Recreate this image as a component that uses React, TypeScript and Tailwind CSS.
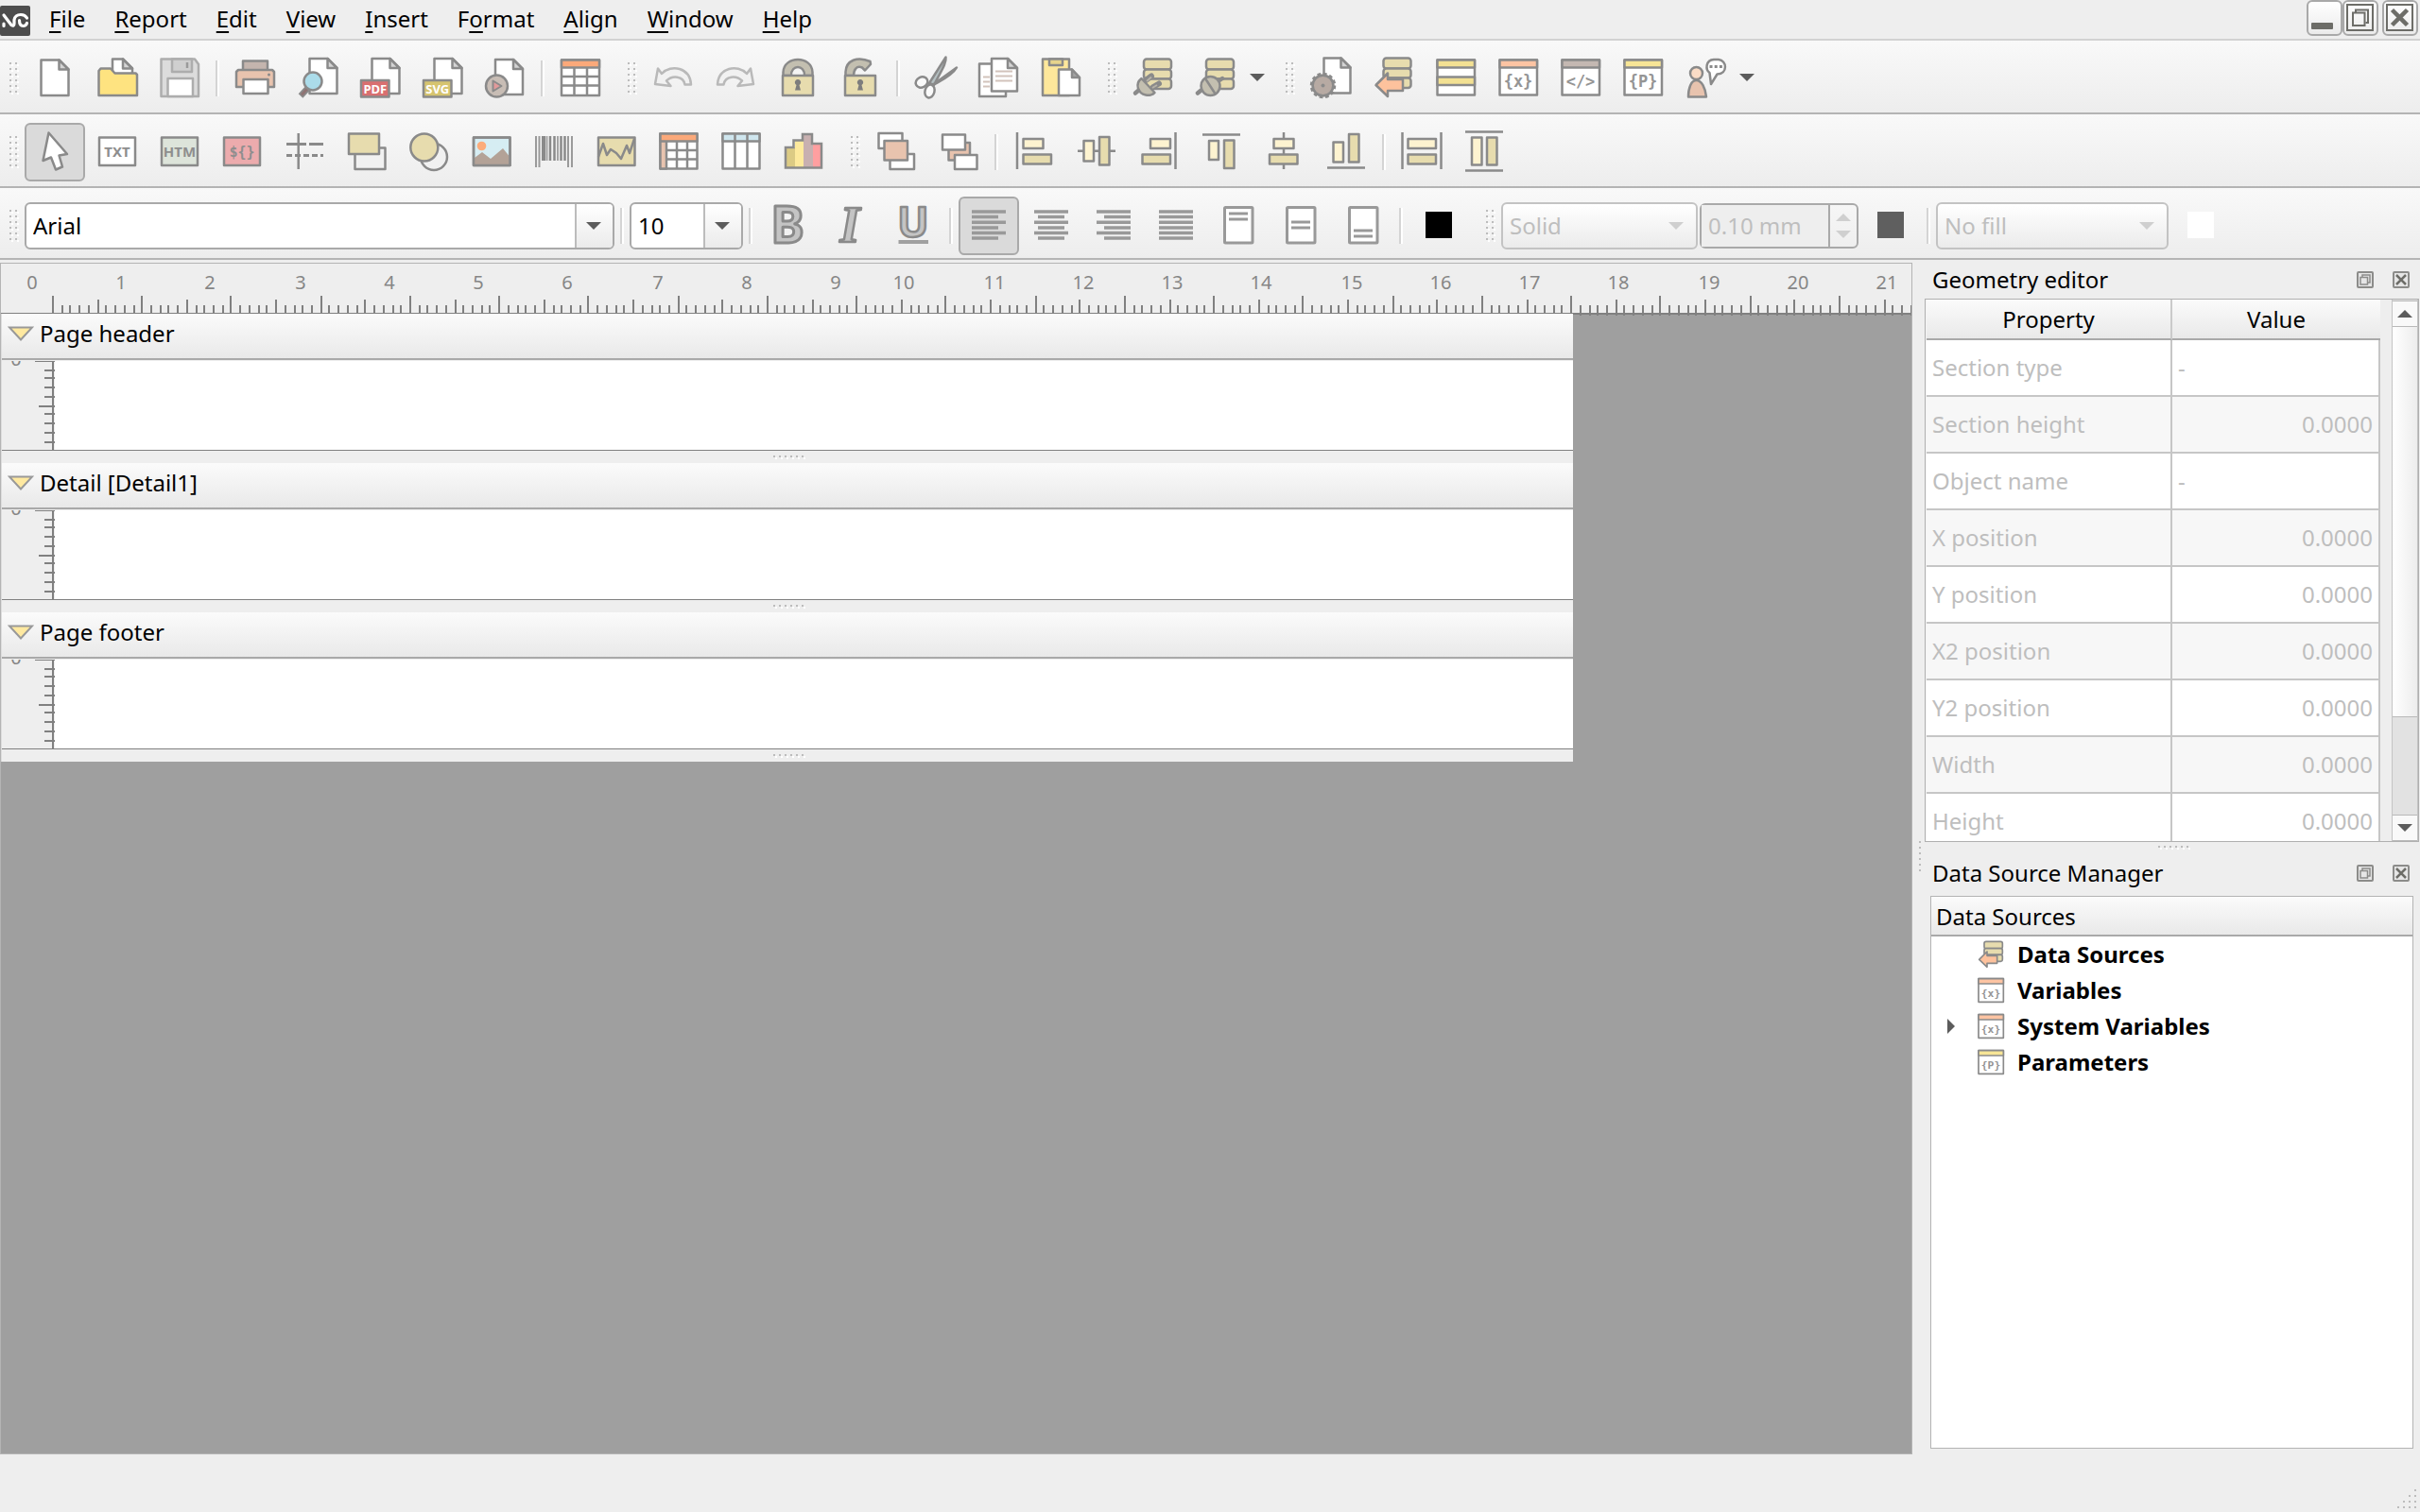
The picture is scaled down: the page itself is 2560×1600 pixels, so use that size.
import React, { type ReactNode } from "react";

const LINE = "#8a8a8a";
const SAND = "#e7dcae";
const CREAM = "#fdf3d0";
const PEACH = "#e8c3ae";
const MONO = "'DejaVu Sans Mono', monospace";

// ---------- icons (48 x 48 grid) ----------

function Icon({ children, className = "size-12" }: { children: ReactNode; className?: string }) {
  return (
    <svg
      viewBox="0 0 48 48"
      className={"overflow-visible " + className}
      fill="none"
      stroke={LINE}
      strokeWidth="2.5"
      strokeLinejoin="round"
      fontFamily="'Noto Sans', sans-serif"
      aria-hidden="true"
    >
      {children}
    </svg>
  );
}

// Sheet of paper with a folded corner
function Sheet({ x, y, w, h }: { x: number; y: number; w: number; h: number }) {
  const r = x + w;
  return (
    <>
      <path d={`M${x} ${y}H${r - 10}L${r} ${y + 10}V${y + h}H${x}Z`} fill="#fff" />
      <path d={`M${r - 10} ${y}V${y + 10}H${r}Z`} fill="#d4d4d4" />
    </>
  );
}

function Box({ x, y, w, h, fill = "#fff" }: { x: number; y: number; w: number; h: number; fill?: string }) {
  return <rect x={x} y={y} width={w} height={h} fill={fill} />;
}

// Database stack
function Stack({ x, y }: { x: number; y: number }) {
  return (
    <g fill={SAND}>
      <rect x={x} y={y} width="29" height="11" rx="3" />
      <rect x={x} y={y + 11} width="29" height="10" rx="3" />
      <rect x={x} y={y + 21} width="29" height="10.5" rx="3" />
    </g>
  );
}

const NewIcon = () => (
  <Icon>
    <Sheet x={9.5} y={5.5} w={29} h={37.5} />
  </Icon>
);

const OpenIcon = () => (
  <Icon>
    <Sheet x={19} y={4.5} w={21} h={30} />
    <path d="M4.5 43V17l2-2.500h10.500l4.500 5h22l1.500 1.500V43Z" fill="#fee380" />
  </Icon>
);

const SaveIcon = () => (
  <Icon>
    <g stroke="#adadad">
      <path d="M4.500 4.500H40L44 10V44H4.500Z" fill="#dcdcdc" />
      <rect x="16" y="4.500" width="21" height="13.500" fill="#cfcfcf" />
      <path d="M32 8v6" stroke="#9a9a9a" />
      <rect x="11.500" y="25" width="26.500" height="19" fill="#fff" />
    </g>
  </Icon>
);

const PrintIcon = () => (
  <Icon>
    <Box x={11} y={6.5} w={26} h={10} fill="#c4b5ae" />
    <path d="M6 16H42L44 18V34H4V18Z" fill={PEACH} />
    <Box x={11.5} y={26} w={26} h={15} />
    <circle cx="38.500" cy="21" r="1.500" fill={LINE} stroke="none" />
  </Icon>
);

const PreviewIcon = () => (
  <Icon>
    <Sheet x={15.5} y={4} w={29} h={37} />
    <path d="M13 36L6 43.500" stroke={LINE} strokeWidth="6.500" />
    <path d="M13 36L7 42.500" stroke="#8f7373" strokeWidth="3" />
    <circle cx="19" cy="28" r="9.500" fill="#abdcea" />
  </Icon>
);

const PdfIcon = () => (
  <Icon>
    <Sheet x={15.5} y={4} w={29} h={37} />
    <Box x={4} y={27} w={29.5} h={17.5} fill="#d96f70" />
    <text x="18.800" y="40.500" fontSize="13" fontWeight="700" fill="#fff" stroke="none" textAnchor="middle">
      PDF
    </text>
  </Icon>
);

const SvgIcon = () => (
  <Icon>
    <Sheet x={15.5} y={4} w={29} h={37} />
    <Box x={4} y={27} w={29.5} h={17.5} fill="#d6c46f" />
    <text x="18.800" y="40.500" fontSize="13" fontWeight="700" fill="#fff" stroke="none" textAnchor="middle">
      SVG
    </text>
  </Icon>
);

const RunIcon = () => (
  <Icon>
    <Sheet x={14} y={5} w={29} h={37} />
    <circle cx="15.500" cy="33" r="11.500" fill="#c8bdb5" />
    <path d="M11.500 27.500V38.500L20.500 33Z" fill="#e29a9a" strokeWidth="2" />
  </Icon>
);

const TableIcon = () => (
  <Icon>
    <Box x={4} y={5.5} w={40} h={37.5} />
    <Box x={4} y={5.5} w={40} h={8} fill="#fba97a" />
    <path d="M4 23H44M4 32.500H44M17.500 14V43M31 14V43" />
  </Icon>
);

const UndoPath = () => (
  <path
    d="M8 14.500L5 31L21.500 33L17 27.500C23 21.500 35 22 36.500 31.500H43C42 13.500 22 9.500 12 20Z"
    fill="#f1f1f1"
    stroke="#b9b9b9"
    strokeWidth="2.5"
  />
);

const UndoIcon = () => (
  <Icon>
    <UndoPath />
  </Icon>
);

const RedoIcon = () => (
  <Icon>
    <g transform="matrix(-1 0 0 1 48 0)">
      <UndoPath />
    </g>
  </Icon>
);

const LockIcon = () => (
  <Icon>
    <path d="M8.500 22V18.500C9 .5 39 .5 39.500 18.500V22H31C31.500 10 16.500 10 17 22Z" fill="#c3bfb0" />
    <Box x={8} y={22} w={32} h={21} fill={SAND} />
    <path d="M21 37.500L22.500 32A3.200 3.200 0 1 1 25.500 32L27 37.500Z" fill="#7d7d7d" stroke="none" />
  </Icon>
);

const UnlockIcon = () => (
  <Icon>
    <path d="M8.500 22V18C9 6 21 1 34.500 7L35 10L29 16.500L26 13.500C20 11 17 16 17 22Z" fill="#c3bfb0" />
    <Box x={8} y={22} w={32} h={21} fill={SAND} />
    <path d="M21 37.500L22.500 32A3.200 3.200 0 1 1 25.500 32L27 37.500Z" fill="#7d7d7d" stroke="none" />
  </Icon>
);

const CutIcon = () => (
  <Icon>
    <path d="M17 30L34.500 2.500C35.500 9 29 18 22 32Z" fill="#b4c0c2" />
    <path d="M19 33L46 13.500C43 19 36 24 25 30Z" fill="#b4c0c2" />
    <ellipse cx="9" cy="29" rx="6.500" ry="5.500" transform="rotate(-25 9 29)" fill="#fafafa" />
    <ellipse cx="17.500" cy="38.500" rx="5" ry="7" transform="rotate(15 17.500 38.500)" fill="#fafafa" />
  </Icon>
);

const CopyIcon = () => (
  <Icon>
    <Box x={4} y={9.5} w={28} h={34.5} />
    <path d="M8 23.500H15M8 28.500H15M8 33.500H15" stroke="#d2c3bb" strokeWidth="2" />
    <Sheet x={17} y={4} w={27} h={34.5} />
    <path d="M21 17.500H39M21 22.500H39M21 27.500H39" stroke="#d2c3bb" strokeWidth="2" />
  </Icon>
);

const PasteIcon = () => (
  <Icon>
    <Box x={5} y={4.5} w={28} h={38.5} fill="#fde79b" />
    <Box x={12} y={4.500} w={14} h={6.500} fill="#e7d48c" />
    <path d="M22 15.500H36L44 24V43H22Z" fill="#fff" />
    <path d="M36 15.500V24H44Z" fill="#a4a4a4" />
  </Icon>
);

const ConnectIcon = () => (
  <Icon>
    <Stack x={14} y={4.5} />
    <path d="M16 27L22 22.500M24 34L30 30.500" strokeWidth="6" strokeLinecap="round" />
    <path d="M11.500 25C4 31 8 41 16 42.500C20 43.500 24 42 25.500 40Z" fill="#c3bfb0" />
    <path d="M17 28L22 23.500M23 35L28 32" stroke="#b5b1a6" strokeWidth="2" />
    <path d="M8 38L5 40.500" strokeWidth="4.500" strokeLinecap="round" />
  </Icon>
);

const DisconnectIcon = () => (
  <Icon>
    <Stack x={14} y={4.5} />
    <path d="M8 38L5 40.500M28 27L31 25" strokeWidth="4.500" strokeLinecap="round" />
    <circle cx="18.500" cy="33" r="10" fill="#c3bfb0" />
    <path d="M13 25L24 42" />
  </Icon>
);

const SettingsIcon = () => (
  <Icon>
    <Sheet x={16.500} y={3.500} w={28} h={37} />
    <circle cx="15.500" cy="32.500" r="12" fill="#b7aaa3" stroke="none" />
    <circle cx="15.500" cy="32.500" r="12.500" strokeWidth="2.5" strokeDasharray="3.800 2.745" />
    <circle cx="15.500" cy="32.500" r="10.800" />
    <circle cx="15.500" cy="32.500" r="2" fill={LINE} stroke="none" />
  </Icon>
);

const DataSourceIcon = ({ className }: { className?: string }) => (
  <Icon className={className}>
    <Stack x={13.500} y={3.500} />
    <path d="M5.500 32L18 19.500V26H34V38H18V44Z" fill="#fdc29d" />
  </Icon>
);

const GroupsIcon = () => (
  <Icon>
    <Box x={4.500} y={5.500} w={39.500} h={37} />
    <Box x={4.500} y={5.500} w={39.500} h={8} fill="#f3e193" />
    <Box x={4.500} y={23.500} w={39.500} h={8.500} fill="#f3e193" />
  </Icon>
);

// Window with a coloured title bar and a short code in it
function CodeIcon({ code, fill, className }: { code: string; fill: string; className?: string }) {
  return (
    <Icon className={className}>
      <Box x={4.500} y={5.500} w={39.500} h={37} />
      <Box x={4.500} y={5.500} w={39.500} h={8} fill={fill} />
      <text
        x="24"
        y="34"
        fontSize="17"
        fontWeight="700"
        fontFamily={MONO}
        fill="#959595"
        stroke="none"
        textAnchor="middle"
      >
        {code}
      </text>
    </Icon>
  );
}

const SupportIcon = () => (
  <Icon>
    <path d="M6 44.500C6 35 9 27 14.500 27S24 35 25 44.500Z" fill={PEACH} />
    <circle cx="14.500" cy="19.500" r="6.500" fill="#fbdcc6" />
    <path d="M30 31L28.500 19C24 16 24 5.500 33 5H38C47 6 48 20 36.500 20.500Z" fill="#fff" />
    <path d="M28.500 12.500H42" strokeWidth="3" strokeDasharray="3 2.200" />
  </Icon>
);

const PointerIcon = () => (
  <Icon>
    <path d="M17.500 4.500L37 27L28.500 28.500L32 40.500L25 43.500L20 30.500L11.500 34Z" fill="#fff" />
  </Icon>
);

function LabelIcon({ text, fill, font }: { text: string; fill: string; font?: string }) {
  return (
    <Icon>
      <Box x={5} y={9.500} w={38} h={29.500} fill={fill} />
      <text
        x="24"
        y="29.500"
        fontSize="15"
        fontWeight="700"
        fontFamily={font}
        fill="#8e8e8e"
        stroke="none"
        textAnchor="middle"
      >
        {text}
      </text>
    </Icon>
  );
}

const GuidesIcon = () => (
  <Icon>
    <path d="M17.700 5V43" />
    <path d="M5 16.500H26M29 16.500H44" strokeWidth="3" />
    <path d="M5 28.500H44" strokeWidth="3" strokeDasharray="6 3" />
  </Icon>
);

const RectIcon = () => (
  <Icon>
    <Box x={11.500} y={20.500} w={32} h={22.500} fill="#f1f1f1" />
    <Box x={5} y={5.500} w={32} h={21.500} fill={SAND} />
  </Icon>
);

const EllipseIcon = () => (
  <Icon>
    <circle cx="29" cy="30" r="14" fill="#f1f1f1" />
    <circle cx="18.800" cy="20" r="14.500" fill={SAND} />
  </Icon>
);

const ImageIcon = () => (
  <Icon>
    <Box x={5} y={9.500} w={38.500} h={29.500} fill="#d6edf3" />
    <circle cx="13.500" cy="18.500" r="4.800" fill="#fcac7b" stroke="none" />
    <path d="M6 31L14 25L23 32L36 21L42.500 29V38H6Z" fill="#b3a297" stroke="none" />
    <Box x={5} y={9.500} w={38.500} h={29.500} fill="none" />
  </Icon>
);

const BarcodeIcon = () => (
  <Icon>
    <path d="M5 8V41M8.500 8V41M39 8V41M43 8V41" strokeWidth="2" stroke="#9a9a9a" />
    <path d="M13 8V34" strokeWidth="4" />
    <path d="M20 8V34M24.500 8V34M31.500 8V34M35.500 8V34" strokeWidth="2.5" />
    <path d="M16.500 8V34M28 8V34" strokeWidth="2" stroke="#a4a4a4" />
  </Icon>
);

const ChartLineIcon = () => (
  <Icon>
    <Box x={5} y={9.500} w={38.500} h={29.500} fill={SAND} />
    <path d="M5 30L10 16L14 28L18 22L24 26L29 32L35 18L38 26L43 11" />
  </Icon>
);

const CrosstabIcon = () => (
  <Icon>
    <Box x={4.500} y={5.500} w={39} h={37} />
    <Box x={4.500} y={5.500} w={6.500} h={37} fill={PEACH} />
    <Box x={4.500} y={5.500} w={39} h={8} fill="#fba97a" />
    <path d="M11 23H44M11 32.500H44M22 14V42M33 14V42" />
  </Icon>
);

const BandTableIcon = () => (
  <Icon>
    <Box x={4.500} y={5.500} w={39} h={37} />
    <Box x={4.500} y={5.500} w={39} h={8} fill="#cfe6ee" />
    <path d="M17.500 6V42M30.500 6V42" />
  </Icon>
);

const BarsIcon = () => (
  <Icon>
    <g stroke="none">
      <Box x={5} y={20} w={10} h={21} fill="#dccb84" />
      <Box x={15} y={12} w={9} h={29} fill="#fde99c" />
      <Box x={24} y={6} w={10} h={35} fill="#c8b0b0" />
      <Box x={34} y={16} w={9} h={25} fill="#ff9fa0" />
    </g>
    <path d="M5 41.500V20H13.500V12.500H23V6H33V16H43V41.500Z" strokeLinejoin="miter" />
  </Icon>
);

const ToFrontIcon = () => (
  <Icon>
    <Box x={5.500} y={5} w={25} h={16} />
    <Box x={17.500} y={27} w={25.500} h={16} />
    <Box x={11.500} y={13} w={24.500} h={20.500} fill={PEACH} />
  </Icon>
);

const ToBackIcon = () => (
  <Icon>
    <Box x={13.500} y={15} w={22.500} h={18.500} fill={PEACH} />
    <Box x={7} y={6.500} w={24} h={16} />
    <Box x={20} y={28} w={23.500} h={15} />
  </Icon>
);

const AlignLeftIcon = () => (
  <Icon>
    <path d="M6 4V43" />
    <Box x={12.500} y={11} w={21} h={10} fill={CREAM} />
    <Box x={12.500} y={27.500} w={29.500} h={10} fill={SAND} />
  </Icon>
);

const AlignHCenterIcon = () => (
  <Icon>
    <path d="M4 23.800H44" />
    <Box x={10.500} y={13} w={10.500} h={21.500} fill={CREAM} />
    <Box x={27} y={9} w={10.500} h={29.500} fill={SAND} />
  </Icon>
);

const AlignRightIcon = () => (
  <Icon>
    <path d="M41.500 4V43" />
    <Box x={15} y={11} w={21} h={10} fill={CREAM} />
    <Box x={6.500} y={27.500} w={29.500} h={10} fill={SAND} />
  </Icon>
);

const AlignTopIcon = () => (
  <Icon>
    <path d="M4 6.500H44" />
    <Box x={11} y={13} w={10} h={20} fill={CREAM} />
    <Box x={27} y={12.500} w={10.500} h={29.500} fill={SAND} />
  </Icon>
);

const AlignVCenterIcon = () => (
  <Icon>
    <path d="M24 4V43" />
    <Box x={13.500} y={11} w={21} h={10} fill={CREAM} />
    <Box x={9} y={27.500} w={29.500} h={10} fill={SAND} />
  </Icon>
);

const AlignBottomIcon = () => (
  <Icon>
    <path d="M4 41.500H44" />
    <Box x={10.500} y={14.500} w={10.500} h={21} fill={CREAM} />
    <Box x={27} y={6} w={10.500} h={29.500} fill={SAND} />
  </Icon>
);

const SameWidthIcon = () => (
  <Icon>
    <path d="M3.500 4V43M44.500 4V43" />
    <Box x={9.500} y={11} w={29.500} h={10} fill={CREAM} />
    <Box x={9.500} y={27.500} w={29.500} h={10} fill={SAND} />
  </Icon>
);

const SameHeightIcon = () => (
  <Icon>
    <path d="M4 3.500H44M4 44.500H44" />
    <Box x={11} y={9.500} w={10.500} h={29} fill={CREAM} />
    <Box x={27} y={9.500} w={10.500} h={29} fill={SAND} />
  </Icon>
);

const BoldIcon = () => (
  <Icon>
    <text x="23" y="43" fontSize="53" fontWeight="700" fill="#c4c4c4" strokeWidth="3" textAnchor="middle">
      B
    </text>
  </Icon>
);

const ItalicIcon = () => (
  <Icon>
    <text
      x="23"
      y="41.500"
      fontSize="54"
      fontWeight="700"
      fontStyle="italic"
      fontFamily="'Liberation Serif', serif"
      fill="#c4c4c4"
      textAnchor="middle"
    >
      I
    </text>
  </Icon>
);

const UnderlineIcon = () => (
  <Icon>
    <text x="24" y="36.500" fontSize="44" fontWeight="700" fill="#c4c4c4" textAnchor="middle">
      U
    </text>
    <path d="M8.500 42H40" stroke="#a0a0a0" strokeWidth="4" />
  </Icon>
);

// Long and short lines by turns, the short ones run from x1 to x2
function TextLines({ x1, x2 }: { x1: number; x2: number }) {
  return (
    <Icon>
      <g stroke="#999" strokeWidth="3.500">
        <path d="M6 10H42M6 21.300H42M6 32.600H42" />
        <path d={`M${x1} 15.600H${x2}M${x1} 27H${x2}M${x1} 38H${x2}`} />
      </g>
    </Icon>
  );
}

function PageLines({ y }: { y: number }) {
  return (
    <Icon>
      <rect x="9.500" y="5.500" width="29.500" height="37.500" rx="1" fill="#fff" stroke="#999" strokeWidth="3" />
      <path d={`M14 ${y}H34M14 ${y + 6}H34`} stroke="#999" strokeWidth="3" />
    </Icon>
  );
}

// ---------- toolbar parts ----------

const RAISED = "bg-gradient-to-b from-white to-[#ebebeb]";
const HEADER = "bg-gradient-to-b from-[#fbfbfb] to-[#e9e9e9]";

function Toolbar({ children, height = "h-[78px]" }: { children: ReactNode; height?: string }) {
  return (
    <div
      role="toolbar"
      className={
        "flex shrink-0 items-start border-b-2 border-[#b4b4b4] bg-gradient-to-b from-[#f9f9f9] to-[#ededed] pt-[9px] " +
        height
      }
    >
      {children}
    </div>
  );
}

function Group({ children }: { children: ReactNode }) {
  return (
    <div className="flex items-center gap-[2px] pr-2">
      <Handle />
      {children}
    </div>
  );
}

function Handle() {
  const dots: ReactNode[] = [];
  for (let row = 0; row < 6; row++) {
    for (let col = 0; col < 2; col++) {
      dots.push(
        <g key={`${row}-${col}`} transform={`translate(${col * 6} ${row * 6})`}>
          <rect x="2" y="2" width="2" height="2" fill="#fff" />
          <rect width="2" height="2" fill="#bcbcbc" />
        </g>
      );
    }
  }
  return (
    <span className="flex w-6 justify-center pl-[6px]" aria-hidden="true">
      <svg width="10" height="34" shapeRendering="crispEdges">
        {dots}
      </svg>
    </span>
  );
}

function Divider() {
  return (
    <span className="flex w-3 justify-center" aria-hidden="true">
      <span className="h-[38px] w-1 border-x-2 border-l-[#d4d4d4] border-r-white" />
    </span>
  );
}

function Tool({ label, active, children }: { label: string; active?: boolean; children: ReactNode }) {
  return (
    <button
      type="button"
      aria-label={label}
      aria-pressed={active}
      className={
        "flex h-[62px] w-16 items-center justify-center rounded-md border-2 pb-[2px] " +
        (active ? "border-[#a9a9a9] bg-[#dadada]" : "border-transparent hover:bg-white/60")
      }
    >
      {children}
    </button>
  );
}

function Triangle({ className }: { className?: string }) {
  return (
    <svg width="16" height="8" viewBox="0 0 16 8" className={className} aria-hidden="true">
      <path d="M0 0H16L8 8Z" fill="currentColor" />
    </svg>
  );
}

function MenuTool({ label, children }: { label: string; children: ReactNode }) {
  return (
    <button
      type="button"
      aria-label={label}
      className="flex h-[62px] w-[88px] items-center rounded-md border-2 border-transparent pb-[2px] pl-[6px] hover:bg-white/60"
    >
      {children}
      <Triangle className="ml-3 text-[#5c5c5c]" />
    </button>
  );
}

// Drop-down; "split" draws the arrow on a button of its own
function Combo({ label, value, split, disabled, width }: {
  label: string;
  value: string;
  split?: boolean;
  disabled?: boolean;
  width: string;
}) {
  return (
    <span className={"relative flex h-[50px] " + width}>
      <select
        aria-label={label}
        disabled={disabled}
        defaultValue={value}
        className={
          "w-full appearance-none rounded-md border-2 pl-[7px] pr-10 outline-none " +
          (split ? "border-[#a9a9a9] bg-white " : "bg-gradient-to-b from-white to-[#ebebeb] ") +
          (disabled ? "border-[#c3c3c3] text-[#bebebe] opacity-100" : "border-[#a9a9a9] text-black")
        }
      >
        <option>{value}</option>
      </select>
      <span
        className={
          "pointer-events-none absolute inset-y-[2px] right-[2px] flex w-10 items-center justify-center rounded-r pr-[3px] " +
          (split ? "border-l-2 border-[#bcbcbc] text-[#5c5c5c] " + RAISED : "text-[#cfcfcf]")
        }
      >
        <Triangle />
      </span>
    </span>
  );
}

function Swatch({ label, color }: { label: string; color: string }) {
  return (
    <Tool label={label}>
      <span className={"size-7 " + color} />
    </Tool>
  );
}

// ---------- title bar ----------

const MENU = [
  ["", "F", "ile"],
  ["", "R", "eport"],
  ["", "E", "dit"],
  ["", "V", "iew"],
  ["", "I", "nsert"],
  ["F", "o", "rmat"],
  ["", "A", "lign"],
  ["", "W", "indow"],
  ["", "H", "elp"],
];

function MenuBar() {
  const windowButton = "h-[38px] w-[38px] rounded-md border-2 border-[#a9a9a9] " + RAISED;
  return (
    <header className="flex h-[43px] shrink-0 items-start border-b-2 border-[#d2d2d2]">
      <svg width="32" height="32" viewBox="0 0 32 32" className="mt-[6px]" aria-hidden="true">
        <rect width="32" height="32" rx="2" fill="#4d4d4d" />
        <g fill="none" stroke="#fff" strokeWidth="3.200" strokeLinecap="round">
          <path d="M4 10L12 20.500Q15 22.500 15 19V15Q16 9.500 22 9.500Q26.500 9.500 28.500 13" />
          <path d="M20.500 15.500Q20.500 21.500 24.500 21.500Q27.500 21.500 28.500 18.500" />
          <path d="M4 19V21.500" />
        </g>
      </svg>
      <nav className="ml-3 flex gap-[15px]">
        {MENU.map(([before, key, after]) => (
          <button key={before + key + after} type="button" className="px-2 leading-10">
            {before}
            <span className="underline decoration-2 underline-offset-4">{key}</span>
            {after}
          </button>
        ))}
      </nav>
      <div className="ml-auto flex pr-[2px]">
        <button type="button" aria-label="Minimize" className={windowButton}>
          <svg viewBox="0 0 34 34" className="size-full">
            <rect x="3" y="22" width="23" height="7" rx="1" fill="#6d6d68" />
          </svg>
        </button>
        <button type="button" aria-label="Restore" className={windowButton}>
          <svg viewBox="0 0 34 34" className="size-full" fill="none" stroke="#6d6d68" strokeWidth="2">
            <rect x="3" y="3" width="27" height="27" />
            <path d="M12 11V8.500H25V22H22.500" />
            <path d="M9 11.500H21.500V25H9Z" />
          </svg>
        </button>
        <button type="button" aria-label="Close" className={windowButton + " ml-1"}>
          <svg viewBox="0 0 34 34" className="size-full" fill="none" stroke="#6d6d68">
            <rect x="3" y="3" width="27" height="27" strokeWidth="2" />
            <path d="M8.500 8.500L24.500 24.500M24.500 8.500L8.500 24.500" strokeWidth="4.500" />
          </svg>
        </button>
      </div>
    </header>
  );
}

// ---------- report canvas ----------

// One millimetre is 4.7244 units of two pixels
const tick = (mm: number) => 2 * Math.round(mm * 4.7244);

function HorizontalRuler() {
  const marks = Array.from({ length: 220 }, (_, mm) => mm);
  return (
    <svg
      width="100%"
      height="55"
      className="-mb-[2px] block shrink-0"
      fill="#808080"
      shapeRendering="crispEdges"
      aria-hidden="true"
    >
      {marks.map((mm) => {
        const top = mm % 10 === 0 ? 34 : mm % 5 === 0 ? 38 : 44;
        return <rect key={mm} x={54 + tick(mm)} y={top} width="2" height={55 - top} />;
      })}
      {marks
        .filter((mm) => mm % 10 === 0)
        .map((mm) => (
          <text key={mm} x={(mm < 100 ? 33 : 11) + tick(mm)} y="27" fontSize="20" fill="#868686" textAnchor="middle">
            {mm / 10}
          </text>
        ))}
      <rect y="52" width="100%" height="2" />
    </svg>
  );
}

function VerticalRuler() {
  return (
    <svg
      width="56"
      height="94"
      className="block shrink-0 bg-[#eee]"
      fill="#808080"
      shapeRendering="crispEdges"
      aria-hidden="true"
    >
      <text x="15" y="5" fontSize="20" fill="#868686" textAnchor="middle">
        0
      </text>
      {Array.from({ length: 10 }, (_, mm) => {
        const left = mm === 0 ? 35 : mm === 5 ? 39 : 45;
        return <rect key={mm} x={left} y={tick(mm) - 1} width={56 - left} height="2" />;
      })}
      <rect x="53" width="2" height="94" />
    </svg>
  );
}

function SplitDots() {
  return (
    <svg width="34" height="4" className="ml-1" shapeRendering="crispEdges" aria-hidden="true">
      {[0, 1, 2, 3, 4, 5].map((i) => (
        <g key={i}>
          <rect x={i * 6 + 2} y="2" width="2" height="2" fill="#fff" />
          <rect x={i * 6} width="2" height="2" fill="#bcbcbc" />
        </g>
      ))}
    </svg>
  );
}

function Section({ title }: { title: string }) {
  return (
    <section>
      <div className={"h-[49px] border-b-2 border-[#a9a9a9] " + HEADER}>
        <button type="button" className="flex items-center gap-[6px] pl-[6px] leading-[42px]">
          <svg width="28" height="16" viewBox="0 0 28 16" aria-hidden="true">
            <path d="M2 1.500H26L14 14.500Z" fill="#ffe9a0" stroke="#999" strokeWidth="2" />
          </svg>
          {title}
        </button>
      </div>
      <div className="mt-px flex border-b border-[#808080] bg-white">
        <VerticalRuler />
      </div>
      <div className="flex h-[13px] items-center justify-center">
        <SplitDots />
      </div>
    </section>
  );
}

// ---------- docks ----------

const ROWS = [
  ["Section type", "-"],
  ["Section height", "0.0000"],
  ["Object name", "-"],
  ["X position", "0.0000"],
  ["Y position", "0.0000"],
  ["X2 position", "0.0000"],
  ["Y2 position", "0.0000"],
  ["Width", "0.0000"],
  ["Height", "0.0000"],
];

function DockTitle({ title }: { title: string }) {
  return (
    <div className="flex h-[41px] shrink-0 items-center pl-2 pr-[11px]">
      <h2>{title}</h2>
      <button type="button" aria-label={"Float " + title} className="ml-auto">
        <svg width="18" height="18" viewBox="0 0 18 18" fill="none" stroke="#8c8c8a" strokeWidth="1.500">
          <rect x="1" y="1" width="16" height="16" rx="1" fill="#e6e6e6" strokeWidth="2" />
          <path d="M6 6V4H14V12H12M4 6.500H11.500V14H4Z" />
        </svg>
      </button>
      <button type="button" aria-label={"Close " + title} className="ml-5">
        <svg width="18" height="18" viewBox="0 0 18 18" fill="none" stroke="#8c8c8a">
          <rect x="1" y="1" width="16" height="16" rx="1" fill="#e6e6e6" strokeWidth="2" />
          <path d="M4 4L14 14M14 4L4 14" stroke="#6d6d68" strokeWidth="2.500" />
        </svg>
      </button>
    </div>
  );
}

function GeometryEditor() {
  const arrow = "flex h-7 w-full shrink-0 items-center justify-center border-[#b9b9b9] bg-[#f9f9f9] text-[#5c5c5c]";
  return (
    <div className="mr-px flex h-[575px] border border-[#b0b0b0] bg-white">
      <div className="h-full flex-1 overflow-hidden border-l border-[#f4f4f4]">
        <div className="bg-[#eee]">
          <table className="w-[calc(100%-12px)] table-fixed border-separate border-spacing-0 bg-white">
            <thead>
              <tr>
                <th
                  className={
                    "h-[43px] w-[260px] border-b-2 border-r-2 border-b-[#a9a9a9] border-r-[#cacaca] p-0 font-normal " +
                    HEADER
                  }
                >
                  Property
                </th>
                <th className={"border-b-2 border-[#a9a9a9] p-0 font-normal " + HEADER}>Value</th>
              </tr>
            </thead>
            <tbody className="text-[#bebebe]">
              {ROWS.map(([name, value], i) => (
                <tr key={name} className={i % 2 ? "bg-[#f7f7f7]" : "bg-white"}>
                  <td className="h-[60px] border-b-2 border-r-2 border-[#c6c6c6] p-0 pl-[6px]">{name}</td>
                  <td
                    className={
                      "border-b-2 border-r-2 border-[#c6c6c6] px-[6px] py-0 " +
                      (value === "-" ? "text-left" : "text-right")
                    }
                  >
                    {value}
                  </td>
                </tr>
              ))}
            </tbody>
          </table>
        </div>
      </div>
      <div className="flex w-7 flex-col border-x border-[#c4c4c4] bg-[#e2e2e2] pt-px">
        <button type="button" aria-label="Scroll up" className={arrow + " border-y"}>
          <Triangle className="rotate-180" />
        </button>
        <div className="h-[413px] border-b border-[#b9b9b9] bg-gradient-to-r from-white to-[#ededed]" />
        <button type="button" aria-label="Scroll down" className={arrow + " mt-auto border-y"}>
          <Triangle />
        </button>
      </div>
    </div>
  );
}

const TREE = [
  { name: "Data Sources", icon: <DataSourceIcon className="size-8" /> },
  { name: "Variables", icon: <CodeIcon code="{x}" fill="#fdc4a3" className="size-8" /> },
  { name: "System Variables", icon: <CodeIcon code="{x}" fill="#fdc4a3" className="size-8" />, children: true },
  { name: "Parameters", icon: <CodeIcon code="{P}" fill="#f7e596" className="size-8" /> },
];

function DataSourceTree() {
  return (
    <div className="mb-[6px] ml-[6px] mr-[7px] mt-1 flex-1 border border-[#b4b4b4] bg-white">
      <div className={"h-[42px] border-b-2 border-[#a9a9a9] pl-[5px] leading-[42px] " + HEADER}>Data Sources</div>
      <ul className="font-bold">
        {TREE.map((node) => (
          <li key={node.name} className="flex h-[38px] items-center">
            <span className="w-[47px] pl-[17px]">
              {node.children && (
                <svg width="8" height="16" viewBox="0 0 8 16" aria-hidden="true">
                  <path d="M0 0L8 8L0 16Z" fill="#5c5c5c" />
                </svg>
              )}
            </span>
            {node.icon}
            <span className="ml-3">{node.name}</span>
          </li>
        ))}
      </ul>
    </div>
  );
}

export default function App() {
  return (
    <div className="flex h-screen flex-col overflow-hidden bg-[#eee] font-['Noto_Sans',sans-serif] text-2xl text-black">
      <MenuBar />

      <Toolbar>
        <Group>
          <Tool label="New"><NewIcon /></Tool>
          <Tool label="Open"><OpenIcon /></Tool>
          <Tool label="Save"><SaveIcon /></Tool>
          <Divider />
          <Tool label="Print"><PrintIcon /></Tool>
          <Tool label="Print preview"><PreviewIcon /></Tool>
          <Tool label="Export to PDF"><PdfIcon /></Tool>
          <Tool label="Export to SVG"><SvgIcon /></Tool>
          <Tool label="Run report"><RunIcon /></Tool>
          <Divider />
          <Tool label="Table"><TableIcon /></Tool>
        </Group>
        <Group>
          <Tool label="Undo"><UndoIcon /></Tool>
          <Tool label="Redo"><RedoIcon /></Tool>
          <Tool label="Lock"><LockIcon /></Tool>
          <Tool label="Unlock"><UnlockIcon /></Tool>
          <Divider />
          <Tool label="Cut"><CutIcon /></Tool>
          <Tool label="Copy"><CopyIcon /></Tool>
          <Tool label="Paste"><PasteIcon /></Tool>
        </Group>
        <Group>
          <Tool label="Connect"><ConnectIcon /></Tool>
          <MenuTool label="Disconnect"><DisconnectIcon /></MenuTool>
        </Group>
        <Group>
          <Tool label="Report settings"><SettingsIcon /></Tool>
          <Tool label="Data sources"><DataSourceIcon /></Tool>
          <Tool label="Groups"><GroupsIcon /></Tool>
          <Tool label="Variables"><CodeIcon code="{x}" fill="#fdc4a3" /></Tool>
          <Tool label="Script"><CodeIcon code="</>" fill="#c4b8b2" /></Tool>
          <Tool label="Parameters"><CodeIcon code="{P}" fill="#f7e596" /></Tool>
          <MenuTool label="Support"><SupportIcon /></MenuTool>
        </Group>
      </Toolbar>

      <Toolbar>
        <Group>
          <Tool label="Select" active><PointerIcon /></Tool>
          <Tool label="Text"><LabelIcon text="TXT" fill="#fff" /></Tool>
          <Tool label="HTML"><LabelIcon text="HTM" fill="#dde4da" /></Tool>
          <Tool label="Field"><LabelIcon text="${}" fill="#ecabad" font={MONO} /></Tool>
          <Tool label="Line"><GuidesIcon /></Tool>
          <Tool label="Rectangle"><RectIcon /></Tool>
          <Tool label="Ellipse"><EllipseIcon /></Tool>
          <Tool label="Image"><ImageIcon /></Tool>
          <Tool label="Barcode"><BarcodeIcon /></Tool>
          <Tool label="Chart"><ChartLineIcon /></Tool>
          <Tool label="Cross table"><CrosstabIcon /></Tool>
          <Tool label="Data table"><BandTableIcon /></Tool>
          <Tool label="Bar chart"><BarsIcon /></Tool>
        </Group>
        <Group>
          <Tool label="Bring to front"><ToFrontIcon /></Tool>
          <Tool label="Send to back"><ToBackIcon /></Tool>
          <Divider />
          <Tool label="Align left"><AlignLeftIcon /></Tool>
          <Tool label="Align horizontal center"><AlignHCenterIcon /></Tool>
          <Tool label="Align right"><AlignRightIcon /></Tool>
          <Tool label="Align top"><AlignTopIcon /></Tool>
          <Tool label="Align vertical center"><AlignVCenterIcon /></Tool>
          <Tool label="Align bottom"><AlignBottomIcon /></Tool>
          <Divider />
          <Tool label="Fit width"><SameWidthIcon /></Tool>
          <Tool label="Fit height"><SameHeightIcon /></Tool>
        </Group>
      </Toolbar>

      <Toolbar height="h-[76px]">
        <Group>
          <Combo label="Font" value="Arial" split width="w-[624px]" />
          <Divider />
          <Combo label="Font size" value="10" split width="w-[120px]" />
          <Divider />
          <Tool label="Bold"><BoldIcon /></Tool>
          <Tool label="Italic"><ItalicIcon /></Tool>
          <Tool label="Underline"><UnderlineIcon /></Tool>
          <Divider />
          <Tool label="Text left" active><TextLines x1={6} x2={34} /></Tool>
          <Tool label="Text center"><TextLines x1={10} x2={38} /></Tool>
          <Tool label="Text right"><TextLines x1={14} x2={42} /></Tool>
          <Tool label="Justify"><TextLines x1={6} x2={42} /></Tool>
          <Tool label="Text top"><PageLines y={12} /></Tool>
          <Tool label="Text middle"><PageLines y={21} /></Tool>
          <Tool label="Text bottom"><PageLines y={30} /></Tool>
          <Divider />
          <Swatch label="Text color" color="bg-black" />
        </Group>
        <Group>
          <Combo label="Line style" value="Solid" disabled width="w-[208px]" />
          <span className="flex h-12 w-[168px] rounded-md border-2 border-[#a9a9a9]">
            <input
              aria-label="Line width"
              disabled
              defaultValue="0.10 mm"
              className="w-0 flex-1 border-r-2 border-[#a9a9a9] bg-[#eee] pl-[7px] text-[#bebebe]"
            />
            <span className="flex w-7 flex-col items-center justify-center gap-[10px] text-[#cfcfcf]">
              <button type="button" disabled aria-label="Increase"><Triangle className="rotate-180" /></button>
              <button type="button" disabled aria-label="Decrease"><Triangle /></button>
            </span>
          </span>
          <Swatch label="Line color" color="bg-[#5f5f5f]" />
          <Divider />
          <Combo label="Fill style" value="No fill" disabled width="w-[246px]" />
          <Swatch label="Fill color" color="bg-white" />
        </Group>
      </Toolbar>

      <div className="flex min-h-0 flex-1">
        <main className="mt-[3px] flex min-w-0 flex-1 flex-col overflow-hidden border border-[#b4b4b4] bg-[#9f9f9f]">
          <div className="bg-[#eee]">
            <HorizontalRuler />
          </div>
          <div className="w-[1663px] border-l border-[#ddd] bg-[#eee]">
            <Section title="Page header" />
            <Section title="Detail [Detail1]" />
            <Section title="Page footer" />
          </div>
        </main>
        <div className="flex w-[13px] items-center justify-center" aria-hidden="true">
          <svg width="4" height="34" shapeRendering="crispEdges">
            {[0, 1, 2, 3, 4, 5].map((i) => (
              <rect key={i} x="2" y={i * 6} width="2" height="2" fill="#bcbcbc" />
            ))}
          </svg>
        </div>
        <aside className="flex w-[524px] shrink-0 flex-col">
          <DockTitle title="Geometry editor" />
          <GeometryEditor />
          <div className="flex h-3 shrink-0 items-center justify-center">
            <SplitDots />
          </div>
          <DockTitle title="Data Source Manager" />
          <DataSourceTree />
        </aside>
      </div>

      <footer className="flex h-[61px] shrink-0 items-end justify-end">
        <svg width="24" height="24" shapeRendering="crispEdges" fill="#bcbcbc" aria-hidden="true">
          {[0, 1, 2, 3].map((row) =>
            Array.from({ length: row + 1 }, (_, i) => (
              <rect key={`${row}-${i}`} x={18 - i * 6} y={row * 6} width="2" height="2" />
            ))
          )}
        </svg>
      </footer>
    </div>
  );
}
